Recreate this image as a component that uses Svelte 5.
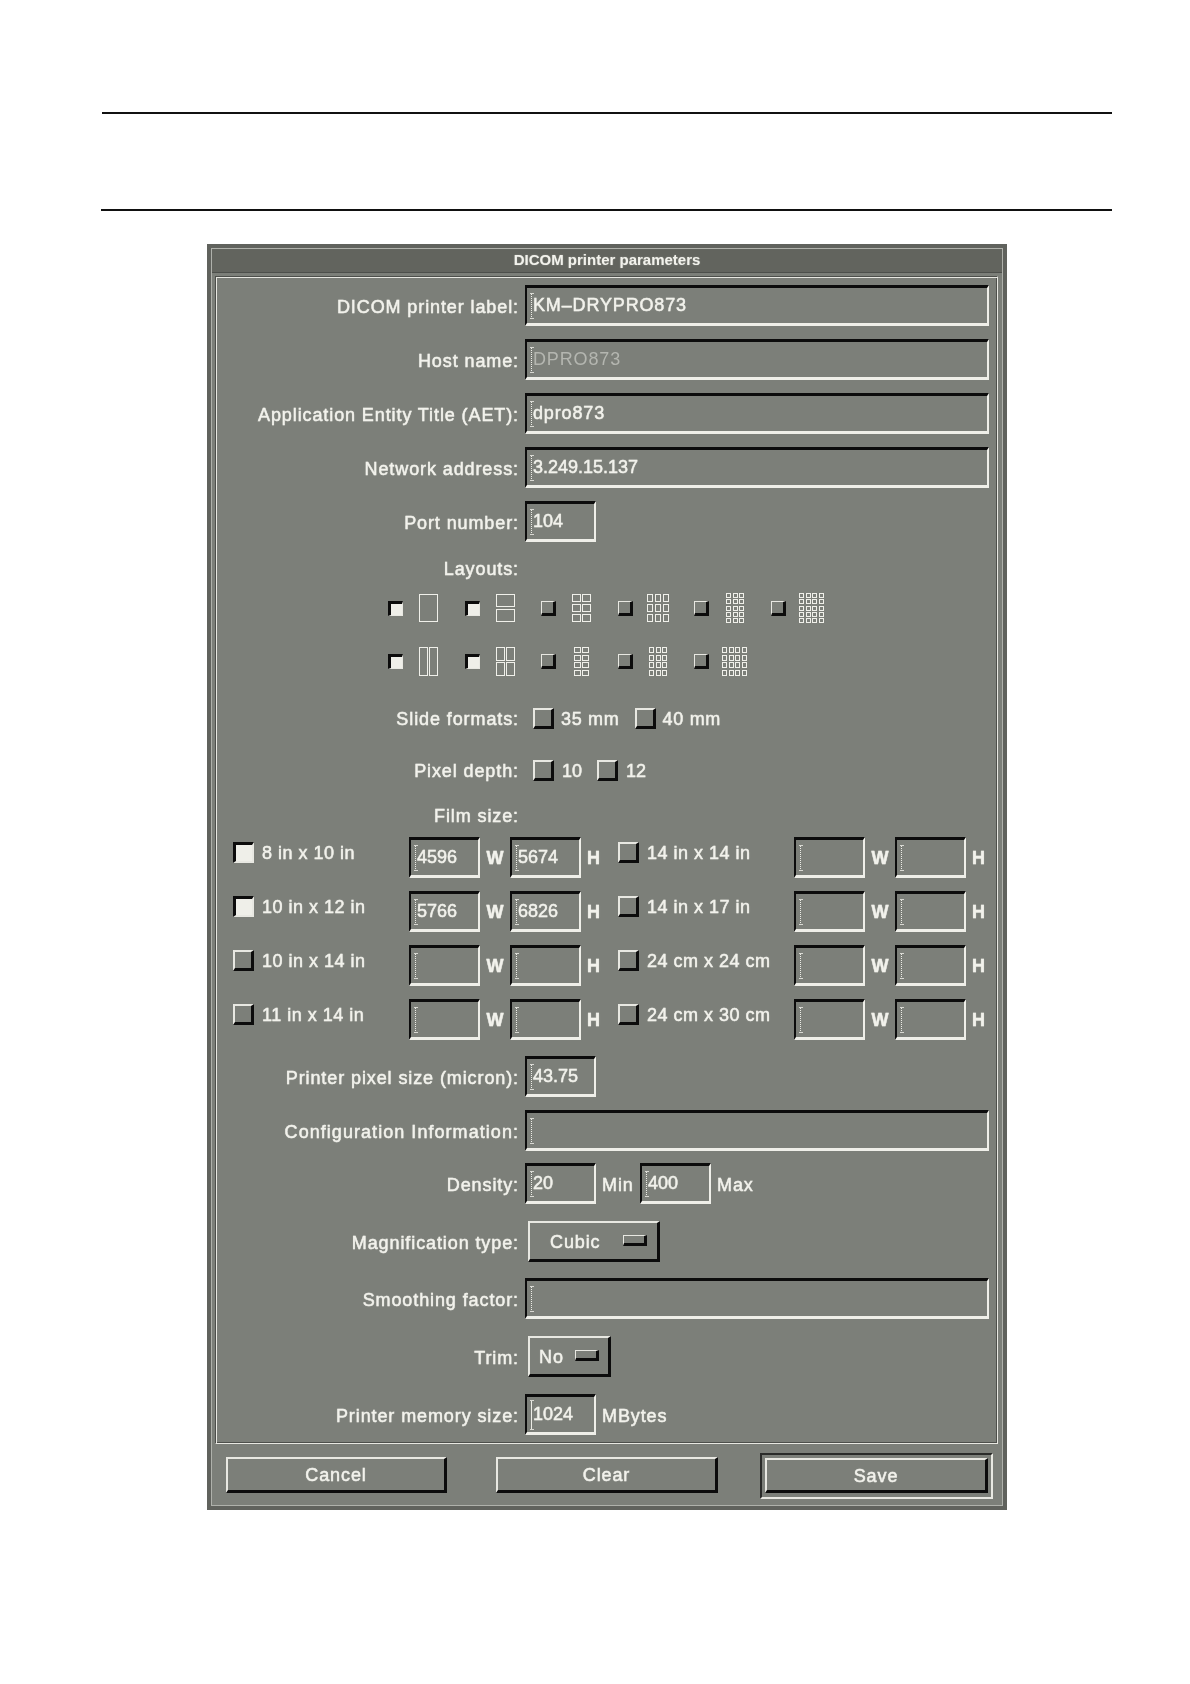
<script>
  const cell = (w, h, cols, rows) => {
    const rw = Math.floor((w + 1) / cols) - 2;
    const rh = Math.floor((h + 1) / rows) - 2;
    const px = cols > 1 ? (w - 1 - rw) / (cols - 1) : 0;
    const py = rows > 1 ? (h - 1 - rh) / (rows - 1) : 0;
    const out = [];
    for (let r = 0; r < rows; r++)
      for (let c = 0; c < cols; c++)
        out.push({ x: 0.5 + Math.round(c * px), y: 0.5 + Math.round(r * py), w: rw, h: rh });
    return out;
  };
  const layoutRows = [
    [
      { w: 19, h: 28, c: 1, r: 1, on: true },
      { w: 19, h: 28, c: 1, r: 2, on: true },
      { w: 19, h: 28, c: 2, r: 3 },
      { w: 22, h: 28, c: 3, r: 3 },
      { w: 18, h: 30, c: 3, r: 5 },
      { w: 25, h: 30, c: 4, r: 5 }
    ],
    [
      { w: 19, h: 29, c: 2, r: 1, on: true },
      { w: 19, h: 29, c: 2, r: 2, on: true },
      { w: 15, h: 29, c: 2, r: 4 },
      { w: 18, h: 29, c: 3, r: 4 },
      { w: 25, h: 29, c: 4, r: 4 }
    ]
  ];
  const film = [
    [{ t: '8 in x 10 in', on: true, a: '4596', b: '5674' }, { t: '14 in x 14 in' }],
    [{ t: '10 in x 12 in', on: true, a: '5766', b: '6826' }, { t: '14 in x 17 in' }],
    [{ t: '10 in x 14 in' }, { t: '24 cm x 24 cm' }],
    [{ t: '11 in x 14 in' }, { t: '24 cm x 30 cm' }]
  ];
</script>

{#snippet field(value = '', cls = 'short', valCls = '')}
  <div class="field {cls}"><span class="caret"></span><span class="val {valCls}">{value}</span></div>
{/snippet}

<div class="page">
  <div class="rule thin"></div>
  <div class="rule thick"></div>

  <div class="window">
    <div class="frame">
      <div class="title">DICOM printer parameters</div>
      <div class="panel">
        <div class="row m9"><span class="lab">DICOM printer label:</span>{@render field('KM–DRYPRO873', 'wide', 'sp')}</div>
        <div class="row m14"><span class="lab">Host name:</span>{@render field('DPRO873', 'wide', 'dim sp')}</div>
        <div class="row m14"><span class="lab">Application Entity Title (AET):</span>{@render field('dpro873', 'wide', 'sp')}</div>
        <div class="row m14"><span class="lab">Network address:</span>{@render field('3.249.15.137', 'wide')}</div>
        <div class="row m14"><span class="lab">Port number:</span>{@render field('104')}</div>

        <div class="row m16 h20"><span class="lab">Layouts:</span></div>
        {#each layoutRows as lr, i}
          <div class="layouts" class:second={i === 1}>
            {#each lr as l}
              <div class="lcell">
                <span class="check small" class:on={l.on}></span>
                <span class="slot">
                  <svg width={l.w} height={l.h} viewBox="0 0 {l.w} {l.h}">
                    {#each cell(l.w, l.h, l.c, l.r) as q}
                      <rect x={q.x} y={q.y} width={q.w} height={q.h} fill="none" stroke="#f0f0ea" stroke-width="1" />
                    {/each}
                  </svg>
                </span>
              </div>
            {/each}
          </div>
        {/each}

        <div class="row m31 h22">
          <span class="lab">Slide formats:</span>
          <div class="opts">
            <span class="check"></span><span class="opt">35 mm</span>
            <span class="check"></span><span class="opt">40 mm</span>
          </div>
        </div>
        <div class="row m30 h22">
          <span class="lab">Pixel depth:</span>
          <div class="opts">
            <span class="check"></span><span class="opt o2">10</span>
            <span class="check"></span><span class="opt o2">12</span>
          </div>
        </div>

        <div class="row m24 h20"><span class="lab">Film size:</span></div>
        <div class="film">
          {#each film as fr}
            <div class="frow">
              {#each fr as f}
                <div class="fcell">
                  <span class="check" class:on={f.on}></span>
                  <span class="flab">{f.t}</span>
                  {@render field(f.a ?? '')}
                  <span class="unit w">W</span>
                  {@render field(f.b ?? '')}
                  <span class="unit h">H</span>
                </div>
              {/each}
            </div>
          {/each}
        </div>

        <div class="row m17"><span class="lab">Printer pixel size (micron):</span>{@render field('43.75')}</div>
        <div class="row m14"><span class="lab wider">Configuration Information:</span>{@render field('', 'wide')}</div>
        <div class="row m13">
          <span class="lab">Density:</span>{@render field('20')}
          <span class="suffix min">Min</span>{@render field('400')}
          <span class="suffix">Max</span>
        </div>
        <div class="row m19 h39">
          <span class="lab">Magnification type:</span>
          <div class="menu cubic"><span class="mtext">Cubic</span><i class="ind"></i></div>
        </div>
        <div class="row m17"><span class="lab">Smoothing factor:</span>{@render field('', 'wide')}</div>
        <div class="row m19 h39">
          <span class="lab">Trim:</span>
          <div class="menu trim"><span class="mtext">No</span><i class="ind"></i></div>
        </div>
        <div class="row m18">
          <span class="lab">Printer memory size:</span>{@render field('1024', 'short focus')}
          <span class="suffix">MBytes</span>
        </div>
      </div>

      <div class="footer">
        <div class="btn cancel">Cancel</div>
        <div class="btn clear">Clear</div>
        <div class="default"><div class="btn save">Save</div></div>
      </div>
    </div>
  </div>
</div>

<style>
  :global(body) {
    margin: 0;
    background: #fff;
  }
  .page {
    width: 1190px;
    height: 1684px;
    padding-top: 112px;
    box-sizing: border-box;
    overflow: hidden;
    font-family: "Liberation Sans", Arial, sans-serif;
    font-size: 18px;
    letter-spacing: 0.9px;
    color: #f2f2ec;
  }
  .rule { background: #111; margin-right: 78px; }
  .thin { height: 1.5px; margin-left: 102px; }
  .thick { height: 2.5px; margin-left: 101px; margin-top: 95px; }

  .window {
    box-sizing: border-box;
    width: 800px;
    height: 1266px;
    margin: 33px 0 0 207px;
    border: 4px solid #60625d;
    background: #7c7f79;
    filter: blur(0.35px);
    -webkit-text-stroke: 0.45px #f2f2ec;
    text-shadow: 0 0 1.5px rgba(240, 240, 234, 0.4);
  }
  .frame {
    box-sizing: border-box;
    height: 100%;
    border: 1px solid #afb1ab;
  }
  .title {
    height: 23px;
    background: #62645e;
    box-shadow: 0 1px 0 #4d4f4b;
    text-align: center;
    font-weight: 700;
    font-size: 15px;
    line-height: 22px;
    letter-spacing: 0;
    -webkit-text-stroke: 0;
  }
  .panel {
    box-sizing: border-box;
    width: 783px;
    height: 1168px;
    margin: 4px 0 0 3px;
    border: 1px solid;
    border-color: #4d4f4b #e8e8e2 #e8e8e2 #4d4f4b;
    box-shadow: inset 1px 1px 0 #e8e8e2, inset -1px -1px 0 #4d4f4b;
  }
  .row {
    display: flex;
    align-items: center;
    height: 40px;
  }
  .h20 { height: 20px; }
  .h22 { height: 22px; }
  .h39 { height: 39px; }
  .m9 { margin-top: 9px; }
  .m13 { margin-top: 13px; }
  .m14 { margin-top: 14px; }
  .m16 { margin-top: 16px; }
  .m17 { margin-top: 17px; }
  .m18 { margin-top: 18px; }
  .m19 { margin-top: 19px; }
  .m24 { margin-top: 24px; }
  .m30 { margin-top: 30px; }
  .m31 { margin-top: 31px; }
  .lab {
    flex: none;
    width: 303px;
    margin-right: 6px;
    text-align: right;
    white-space: nowrap;
    position: relative;
    top: 1px;
  }
  .wider { letter-spacing: 1.05px; }

  .field {
    flex: none;
    align-self: flex-start;
    box-sizing: border-box;
    height: 41px;
    margin-top: -1px;
    display: flex;
    align-items: center;
    padding-left: 4px;
    border: 3px solid;
    border-color: #0c0c0c #efefe9 #efefe9 #0c0c0c;
    border-width: 3px 2px 3px 2px;
    white-space: nowrap;
    letter-spacing: 0;
  }
  .short { width: 71px; }
  .wide { width: 464px; }
  .caret {
    flex: none;
    position: relative;
    box-sizing: border-box;
    width: 1px;
    height: 26px;
    margin-right: 1px;
    border-left: 1px dotted #ecece6;
  }
  .caret::before,
  .caret::after {
    content: "";
    position: absolute;
    left: -2px;
    width: 4px;
    height: 1px;
    background: #d8d8d2;
  }
  .caret::before { top: 0; }
  .caret::after { bottom: 0; }
  .focus .caret {
    border-left-style: solid;
    height: 30px;
  }
  .sp { letter-spacing: 0.85px; }
  .dim { color: #b4b6b0; text-shadow: none; -webkit-text-stroke: 0; }

  .check {
    flex: none;
    display: block;
    box-sizing: border-box;
    width: 21px;
    height: 21px;
    border: 2px solid;
    border-color: #e8e8e2 #0c0c0c #0c0c0c #e8e8e2;
    border-width: 2px 3px 3px 2px;
  }
  .check.on {
    background: #efefe9;
    border-color: #0c0c0c #e8e8e2 #e8e8e2 #0c0c0c;
    border-width: 3px 2px 2px 3px;
  }
  .check.small {
    width: 15px;
    height: 15px;
    border-width: 1.5px 3px 3px 1.5px;
  }
  .check.small.on {
    border-width: 3px 1.5px 1.5px 3px;
  }

  .layouts {
    display: grid;
    grid-template-columns: repeat(6, 76.5px);
    margin: 15px 0 0 172px;
    height: 28px;
    align-items: center;
  }
  .layouts.second {
    margin-top: 26px;
    height: 29px;
  }
  .lcell {
    display: flex;
    align-items: center;
  }
  .slot {
    flex: none;
    width: 51px;
    display: flex;
    justify-content: center;
  }
  .slot svg { display: block; }

  .opts {
    display: flex;
    align-items: center;
    margin-left: 8px;
  }
  .opt {
    margin: 0 15px 0 7px;
    position: relative;
    top: 1px;
    letter-spacing: 0.7px;
  }
  .o2 { margin: 0 15px 0 8px; letter-spacing: 0; }

  .film {
    display: flex;
    flex-direction: column;
    gap: 14px;
    margin: 13px 0 0 17px;
  }
  .frow {
    display: flex;
  }
  .fcell {
    display: flex;
    align-items: flex-start;
    width: 385px;
  }
  .fcell .check { margin-top: 4px; }
  .flab {
    flex: none;
    width: 147px;
    margin-left: 8px;
    line-height: 21px;
    margin-top: 5px;
    white-space: nowrap;
    letter-spacing: 0.5px;
  }
  .unit {
    flex: none;
    line-height: 40px;
    font-weight: 700;
    font-size: 18px;
    letter-spacing: 0;
  }
  .unit.w { width: 30px; text-align: center; }
  .unit.h { width: 37px; padding-left: 6px; box-sizing: border-box; }

  .suffix {
    margin-left: 6px;
    position: relative;
    top: 1px;
  }
  .suffix.min { width: 38px; flex: none; }

  .menu {
    flex: none;
    align-self: flex-start;
    box-sizing: border-box;
    height: 41px;
    margin: -2px 0 0 3px;
    display: flex;
    align-items: center;
    border: 2px solid;
    border-color: #e8e8e2 #0c0c0c #0c0c0c #e8e8e2;
    border-width: 2px 3px 3px 2px;
  }
  .mtext { position: relative; top: 1px; }
  .menu .ind {
    flex: none;
    display: block;
    box-sizing: border-box;
    width: 24px;
    height: 11px;
    border: 2px solid;
    border-color: #e8e8e2 #0c0c0c #0c0c0c #e8e8e2;
    border-width: 1.5px 3px 3px 1.5px;
    position: relative;
    top: -1px;
  }
  .cubic { width: 132px; padding-left: 20px; }
  .cubic .ind { margin-left: 22px; }
  .trim { width: 83px; padding-left: 9px; }
  .trim .ind { margin-left: 11px; }

  .footer {
    display: flex;
    align-items: flex-start;
    height: 46px;
    margin: 9px 0 0 14px;
  }
  .btn {
    box-sizing: border-box;
    height: 36px;
    margin-top: 4px;
    line-height: 33px;
    text-align: center;
    border: 2px solid;
    border-color: #e8e8e2 #0c0c0c #0c0c0c #e8e8e2;
    border-width: 2px 3px 3px 2px;
  }
  .cancel { width: 221px; }
  .clear { width: 222px; margin-left: 49px; }
  .default {
    box-sizing: border-box;
    width: 233px;
    height: 46px;
    margin-left: 42px;
    padding: 3px;
    border: 2px solid;
    border-color: #2a2b29 #e8e8e2 #e8e8e2 #2a2b29;
  }
  .save { width: 100%; height: 35px; margin-top: 0; line-height: 32px; }
</style>
